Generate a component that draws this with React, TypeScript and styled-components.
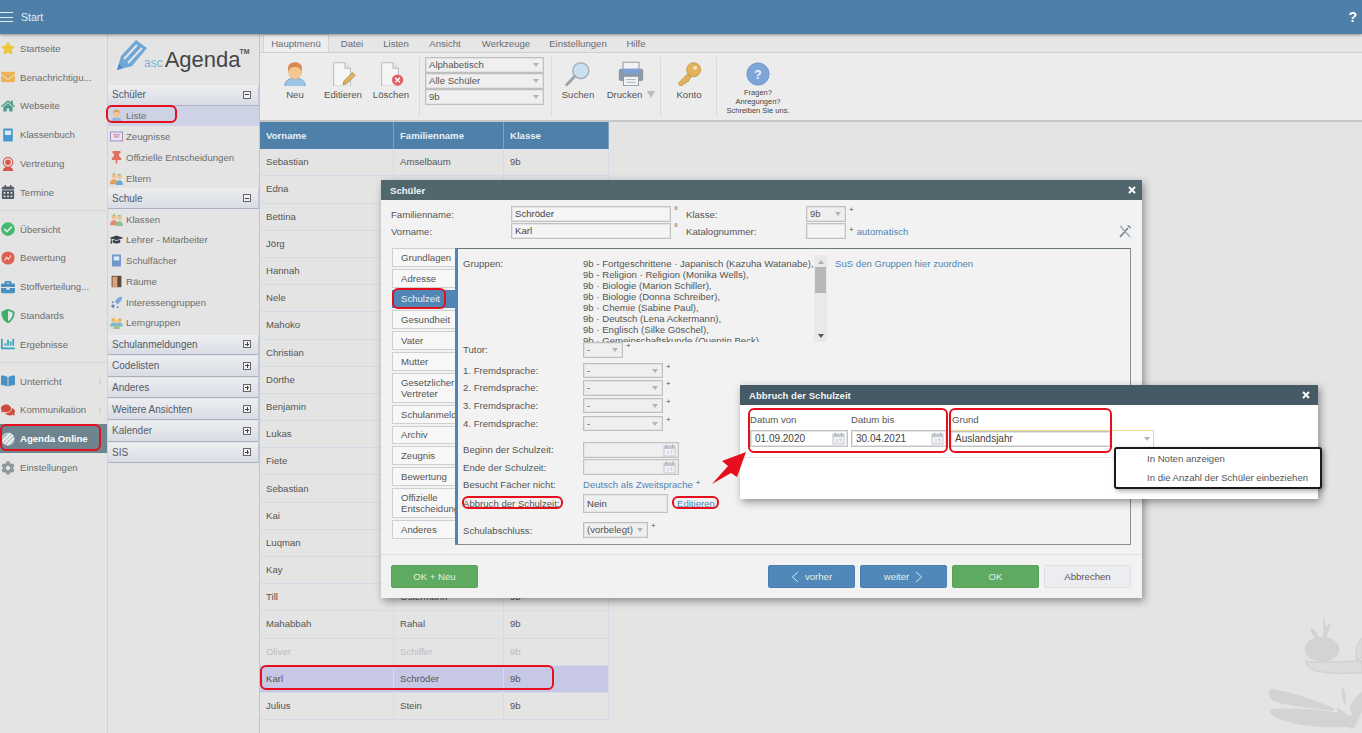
import * as React from 'react';
import styled, { createGlobalStyle } from 'styled-components';
import {
  FaStar, FaEnvelope, FaHome, FaCalendarAlt, FaCheckCircle, FaBriefcase, FaShieldAlt,
  FaChartBar, FaBookOpen, FaComments, FaCog, FaThumbtack, FaGraduationCap,
} from 'react-icons/fa';

const GlobalStyle = createGlobalStyle`
  html, body { margin: 0; padding: 0; background: #e4e4e4; }
  body { font-family: "Liberation Sans", Arial, sans-serif; font-size: 9.6px; color: #555; }
  * { box-sizing: border-box; }
`;

const Page = styled.div`
  position: relative;
  width: 1362px;
  height: 733px;
  overflow: hidden;
  background: #e4e4e4;
`;

const Header = styled.header`
  height: 34px;
  display: flex;
  align-items: center;
  background: #4e7fa8;
  color: #e4ecf3;
  font-size: 10.500px;
  box-shadow: 0 1px 3px rgba(0, 0, 0, .4);
  position: relative;
  z-index: 2;
`;
const Burger = styled.div`
  width: 13px;
  height: 10px;
  margin-right: 8px;
  border-top: 1px solid #e4ecf3;
  border-bottom: 1px solid #e4ecf3;
  position: relative;
  &::after {
    content: '';
    position: absolute;
    left: 0;
    right: 0;
    top: 3.5px;
    border-top: 1px solid #e4ecf3;
  }
`;
const Help = styled.span`
  margin-left: auto;
  margin-right: 5px;
  font-size: 14px;
  font-weight: bold;
  color: #fff;
`;

const Body = styled.div`
  display: flex;
  height: 699px;
`;

const Rail = styled.nav`
  width: 108px;
  flex: none;
  border-right: 1px solid #d2d2d2;
`;
const RailItem = styled.div<{ $active?: boolean }>`
  height: 28.8px;
  display: flex;
  align-items: center;
  gap: 5px;
  padding-left: 1px;
  color: ${p => (p.$active ? '#fff' : '#6d6d6d')};
  font-weight: ${p => (p.$active ? 'bold' : 'normal')};
  background: ${p => (p.$active ? '#6e858f' : 'transparent')};
  svg { flex: none; width: 14px; height: 14px; }
`;
const RailChevron = styled.span`
  margin-left: auto;
  margin-right: 5px;
  color: #c8c8c8;
  font-size: 12px;
`;
const RailDivider = styled.div`
  height: 1px;
  margin: 3.5px 0 3.5px;
  background: #d6d6d6;
`;

const SideNav = styled.nav`
  width: 152px;
  flex: none;
  border-right: 1px solid #c4c4c4;
`;
const Logo = styled.div`
  height: 51px;
  display: flex;
  align-items: flex-end;
  padding: 0 0 13.6px 8px;
`;
const LogoAsc = styled.span`
  color: #7fb0d8;
  font-size: 12px;
  margin: 0 2px 1px -3px;
  line-height: 14px;
`;
const LogoAgenda = styled.span`
  color: #454545;
  font-size: 22px;
  line-height: 22px;
`;
const LogoTm = styled.span`
  align-self: flex-start;
  margin: 14px 0 0 -1px;
  font-size: 7px;
  font-weight: bold;
  color: #555;
`;
const SectionHead = styled.div`
  height: 20.6px;
  display: flex;
  align-items: center;
  justify-content: space-between;
  padding: 0 7px 0 4px;
  color: #555b66;
  font-size: 10px;
  background: linear-gradient(#eceef1, #d9dce4);
  border-bottom: 1px solid #aab0bf;
  border-right: 1px solid #c4c8d2;
`;
const ClosedSections = styled.div`
  margin-top: 1.5px;
  display: flex;
  flex-direction: column;
  gap: 1px;
`;
const Toggle = styled.span<{ $open?: boolean }>`
  width: 8px;
  height: 8px;
  border: 1px solid #666;
  background: #f2f2f2;
  position: relative;
  &::before {
    content: '';
    position: absolute;
    left: 1px;
    right: 1px;
    top: 2.5px;
    border-top: 1px solid #444;
  }
  &::after {
    content: '';
    display: ${p => (p.$open ? 'none' : 'block')};
    position: absolute;
    top: 1px;
    bottom: 1px;
    left: 2.5px;
    border-left: 1px solid #444;
  }
`;
const NavItem = styled.div<{ $active?: boolean }>`
  height: 20.7px;
  display: flex;
  align-items: center;
  gap: 3px;
  padding-left: 2px;
  color: #6d6d6d;
  background: ${p => (p.$active ? '#cdd2e4' : 'transparent')};
  svg { flex: none; width: 13px; height: 13px; }
`;

const Main = styled.main`
  flex: 1;
  min-width: 0;
`;
const RibbonTabs = styled.div`
  height: 19px;
  display: flex;
  align-items: flex-end;
  padding-left: 3px;
  background: #e6e6e6;
  border-bottom: 1px solid #cfcfcf;
`;
const RibbonTab = styled.div<{ $active?: boolean; $width: number }>`
  width: ${p => p.$width}px;
  height: 18px;
  line-height: 17px;
  text-align: center;
  color: #666d77;
  background: ${p => (p.$active ? '#eeeeee' : 'transparent')};
  border: 1px solid ${p => (p.$active ? '#d4d4d4' : 'transparent')};
  border-bottom: 0;
`;
const RibbonBar = styled.div`
  height: 69px;
  display: flex;
  padding-left: 11px;
  background: #ececec;
  border-bottom: 2px solid #c6c6c6;
`;
const RibbonButton = styled.div<{ $width?: number; $top?: number }>`
  width: ${p => p.$width ?? 48}px;
  padding-top: ${p => p.$top ?? 5}px;
  display: flex;
  flex-direction: column;
  align-items: center;
  color: #555;
  svg { display: block; }
`;
const RibbonLabel = styled.div`
  margin-top: 3px;
  line-height: 11px;
  white-space: nowrap;
`;
const DropArrow = styled.span`
  display: inline-block;
  margin-left: 5px;
  border-left: 4px solid transparent;
  border-right: 4px solid transparent;
  border-top: 7px solid #bbb;
`;
const RibbonSep = styled.div<{ $left: number; $right: number }>`
  width: 1px;
  height: 60px;
  margin: 4px ${p => p.$right}px 0 ${p => p.$left}px;
  background: #dadada;
`;
const SelectStack = styled.div`
  width: 119px;
  padding-top: 4px;
  display: flex;
  flex-direction: column;
  gap: .6px;
`;
const SmallPrint = styled.div`
  margin-top: 2px;
  font-size: 7.5px;
  line-height: 9px;
  text-align: center;
  color: #444;
`;

const FakeSelect = styled.div<{ $width?: number; $h?: number }>`
  position: relative;
  width: ${p => (p.$width ? `${p.$width}px` : '100%')};
  height: ${p => p.$h ?? 15.5}px;
  line-height: ${p => (p.$h ?? 15.5) - 2}px;
  padding-left: 3px;
  color: #555;
  background: #efefef;
  border: 1px solid #bfbfbf;
  box-shadow: inset 0 0 0 1px #e2e2e2;
  &::after {
    content: '';
    position: absolute;
    right: 4px;
    top: 5px;
    border-left: 3px solid transparent;
    border-right: 3px solid transparent;
    border-top: 4px solid #b4b4b4;
  }
`;

const StudentTable = styled.div`
  width: 349px;
  display: grid;
  grid-template-columns: 134px 110px 105px;
  grid-auto-rows: 27.19px;
`;
const HeadCell = styled.div`
  display: flex;
  align-items: center;
  padding-left: 6px;
  background: #4e80a9;
  color: #e8eef4;
  font-weight: bold;
  border-right: 1px solid #7ea3c2;
`;
const Cell = styled.div<{ $selected?: boolean; $muted?: boolean }>`
  display: flex;
  align-items: center;
  padding-left: 6px;
  padding-bottom: 1px;
  color: ${p => (p.$muted ? '#bcbcbc' : '#555')};
  background: ${p => (p.$selected ? '#c7c8e6' : 'transparent')};
  border-right: 1px solid #d2dde7;
  border-bottom: 1px solid #d2dde7;
`;

const Dialog = styled.section<{ $x: number; $y: number; $w: number; $h: number; $bg: string }>`
  position: absolute;
  left: ${p => p.$x}px;
  top: ${p => p.$y}px;
  width: ${p => p.$w}px;
  height: ${p => p.$h}px;
  background: ${p => p.$bg};
  box-shadow: 2px 3px 8px rgba(0, 0, 0, .4);
  display: flex;
  flex-direction: column;
`;
const DialogTitle = styled.div<{ $bg: string; $closeGap: number }>`
  height: 20px;
  flex: none;
  display: flex;
  align-items: center;
  justify-content: space-between;
  padding: 0 ${p => p.$closeGap}px 0 9px;
  background: ${p => p.$bg};
  color: #f1f4f5;
  font-weight: bold;
`;
const CloseIcon = () => (
  <svg width="8" height="8" viewBox="0 0 8 8"><path d="M1 1l6 6M7 1L1 7" stroke="#fff" strokeWidth="2" /></svg>
);

const TopForm = styled.div`
  height: 48px;
  flex: none;
  padding: 6px 10px 0;
  display: grid;
  grid-template-columns: 120px 160px 15px 120px 40px 1fr;
  grid-auto-rows: 16px;
  row-gap: 1px;
  align-items: center;
`;
const Label = styled.div`
  color: #555;
  white-space: nowrap;
`;
const Input = styled.div<{ $width?: number; $h?: number; $disabled?: boolean; $white?: boolean }>`
  position: relative;
  width: ${p => (p.$width ? `${p.$width}px` : '100%')};
  height: ${p => p.$h ?? 16}px;
  line-height: ${p => (p.$h ?? 16) - 2}px;
  padding-left: ${p => (p.$white ? 4 : 3)}px;
  color: #444;
  font-size: ${p => (p.$white ? 10 : 9.6)}px;
  background: ${p => (p.$white ? '#fff' : p.$disabled ? '#efefef' : '#f5f5f5')};
  border: 1px solid #c2c2c2;
  box-shadow: inset 0 0 0 1px #e4e4e4;
`;
const Degree = styled.span`
  color: #666;
  margin-left: 3px;
  align-self: start;
  font-size: 10px;
  line-height: 10px;
`;
const Plus = styled.sup`
  color: #555;
  font-size: 8px;
  line-height: 8px;
  margin-left: 3px;
  align-self: flex-start;
`;
const InlineRow = styled.div`
  display: flex;
  align-items: center;
`;
const AutoLink = styled.div`
  display: flex;
  align-items: center;
  color: #4f86b5;
  justify-content: space-between;
`;
const PlusLink = styled.span`
  display: flex;
  align-items: flex-start;
  gap: 3px;
`;

const TabArea = styled.div`
  flex: none;
  height: 297px;
  display: flex;
  padding: 0 11px 0 11px;
`;
const SideTabs = styled.div`
  width: 63px;
  flex: none;
  display: flex;
  flex-direction: column;
  gap: 2px;
`;
const SideTab = styled.div<{ $active?: boolean; $tall?: boolean }>`
  height: ${p => (p.$tall ? 30 : 18.8)}px;
  display: flex;
  align-items: center;
  padding-left: 8px;
  line-height: 11px;
  white-space: nowrap;
  overflow: hidden;
  color: ${p => (p.$active ? '#e8f0f6' : '#555')};
  background: ${p => (p.$active ? '#4f86b5' : '#f7f7f7')};
  border: 1px solid ${p => (p.$active ? '#4f86b5' : '#cfcfcf')};
  border-right: 0;
`;
const TabPanel = styled.div`
  flex: 1;
  padding: 6px 0 0 5px;
  background: #f2f2f2;
  border-top: 1px solid #69767c;
  border-left: 3px solid #4f86b5;
  border-right: 1px solid #8d8d8d;
  border-bottom: 1px solid #8d8d8d;
`;
const FieldRow = styled.div<{ $h?: number; $mt?: number }>`
  display: grid;
  grid-template-columns: 120px 1fr;
  align-items: center;
  height: ${p => p.$h ?? 15.5}px;
  margin-top: ${p => p.$mt ?? 2.2}px;
`;
const GroupRow = styled.div`
  display: flex;
  height: 87px;
`;
const GroupLabel = styled(Label)`
  width: 120px;
  padding-top: 3px;
`;
const GroupList = styled.div`
  width: 231px;
  height: 87px;
  overflow: hidden;
  padding-top: 2.5px;
  line-height: 11.13px;
  white-space: nowrap;
  color: #555;
`;
const FakeScrollbar = styled.div`
  width: 13px;
  height: 87px;
  background: #e9e9e9;
  display: flex;
  flex-direction: column;
  justify-content: space-between;
  align-items: center;
  padding: 5px 0 4px;
`;
const ScrollUp = styled.div`
  border-left: 3px solid transparent;
  border-right: 3px solid transparent;
  border-bottom: 4px solid #b0b0b0;
`;
const ScrollThumb = styled.div`
  width: 11px;
  height: 26px;
  margin-top: 3px;
  margin-bottom: auto;
  background: #b8b8b8;
`;
const ScrollDown = styled.div`
  border-left: 3px solid transparent;
  border-right: 3px solid transparent;
  border-top: 4px solid #555;
`;
const BlueLink = styled.span<{ $ml?: number }>`
  color: #4f86b5;
  margin-left: ${p => p.$ml ?? 0}px;
`;
const GroupLink = styled(BlueLink)`
  padding-top: 3px;
`;
const DateIcon = styled.span`
  position: absolute;
  right: 2px;
  top: 1px;
  display: flex;
`;
const DialogFooter = styled.div`
  flex: 1;
  margin-top: 9px;
  padding: 10px 11px 0 10px;
  border-top: 1px solid #dfdfdf;
  display: flex;
  gap: 5px;
`;
const FooterSpacer = styled.div`
  flex: 1;
`;
const ActionButton = styled.div<{ $kind: 'blue' | 'green' | 'plain' }>`
  width: 87px;
  height: 23px;
  display: flex;
  align-items: center;
  justify-content: center;
  gap: 6px;
  border-radius: 2px;
  color: ${p => (p.$kind === 'plain' ? '#555' : '#e6f0e8')};
  background: ${p => (p.$kind === 'blue' ? '#4f88b9' : p.$kind === 'green' ? '#5faa61' : '#ecedf1')};
  border: 1px solid ${p => (p.$kind === 'blue' ? '#4a7fad' : p.$kind === 'green' ? '#5aa25c' : '#dddde2')};
`;

const CancelForm = styled.div`
  height: 53px;
  flex: none;
  display: flex;
  padding: 9px 0 0 10px;
  border-bottom: 1px solid #e6e6e6;
`;
const CancelField = styled.div<{ $width: number }>`
  width: ${p => p.$width}px;
  flex: none;
`;
const CancelLabel = styled.div<{ $indent?: number }>`
  height: 16px;
  line-height: 12px;
  padding-left: ${p => p.$indent ?? 0}px;
  color: #555;
`;
const ReasonBox = styled.div`
  display: flex;
  width: 204px;
  height: 17px;
  border-top: 1px solid #f0d68c;
  border-right: 1px solid #f0d68c;
  position: relative;
  &::after {
    content: '';
    position: absolute;
    right: 3px;
    top: 6px;
    border-left: 3px solid transparent;
    border-right: 3px solid transparent;
    border-top: 4px solid #b4b4b4;
  }
`;
const PopupMenu = styled.div`
  position: absolute;
  left: 374px;
  top: 62px;
  width: 208px;
  height: 42px;
  padding-left: 31px;
  display: flex;
  flex-direction: column;
  justify-content: space-around;
  background: #fff;
  color: #555;
  border: 2px solid #1a1a1a;
  border-radius: 3px;
  box-shadow: 2px 2px 5px rgba(0, 0, 0, .35);
`;

const Mark = styled.div<{ $x: number; $y: number; $w: number; $h: number }>`
  position: absolute;
  left: ${p => p.$x}px;
  top: ${p => p.$y}px;
  width: ${p => p.$w}px;
  height: ${p => p.$h}px;
  border: 2px solid #e60f1e;
  border-radius: 6px;
  pointer-events: none;
`;
const Arrow = styled.svg`
  position: absolute;
  left: 708px;
  top: 448px;
`;
const Decoration = styled.svg`
  position: absolute;
  left: 1240px;
  top: 600px;
`;

// ---- drawn icons ----

const Person = ({ hair = '#d99a5b', body = '#8fb8dc', skin = '#f2c68f', size = 13 }) => (
  <svg width={size} height={size} viewBox="0 0 16 16">
    <path d="M1.5 16c0-4 3-6 6.500-6s6.500 2 6.500 6z" fill={body} />
    <ellipse cx="8" cy="6" rx="3.700" ry="4.500" fill={skin} />
    <path d="M4.200 6C3.600 2.500 5.500 1 8 1s4.400 1.500 3.800 5C11 4 9.500 3.500 8 3.500S5 4 4.200 6z" fill={hair} />
  </svg>
);
const Pair = ({ a = '#e0a050', b = '#6fa8d8', c = '#7dbb8a' }) => (
  <svg viewBox="0 0 16 16">
    <circle cx="5" cy="5" r="3" fill="#f0c08a" />
    <path d="M0 15c0-4 2-6 5-6s4 2 4 6z" fill={a} />
    <circle cx="11.500" cy="6" r="3" fill="#eec796" />
    <path d="M7 16c0-4 2-6 4.500-6s4.500 2 4.500 6z" fill={b} />
    <path d="M3 3c1-2 3-2 4 0z M9 4c1-2 4-2 5 0z" fill={c} />
  </svg>
);
const VertretungIcon = () => (
  <svg viewBox="0 0 16 16">
    <circle cx="8" cy="6" r="5.500" fill="none" stroke="#d9574a" strokeWidth="1.200" />
    <circle cx="8" cy="6" r="3.200" fill="#d9574a" />
    <path d="M2 16c0-3 3-5 6-5s6 2 6 5z" fill="#d9574a" />
  </svg>
);
const BookIcon = ({ color = '#4a9ad0' }) => (
  <svg viewBox="0 0 16 16">
    <rect x="2.500" y="0.500" width="11" height="15" rx="1" fill={color} />
    <rect x="4.500" y="3" width="7" height="5" fill="#dcecf7" />
  </svg>
);
const BewertungIcon = () => (
  <svg viewBox="0 0 16 16">
    <circle cx="8" cy="8" r="7.500" fill="#e0604f" />
    <path d="M4 11l2.500-4 2 2.500L11.500 5" fill="none" stroke="#f7d7d2" strokeWidth="1.200" />
  </svg>
);
const StripeLogo = () => (
  <svg viewBox="0 0 16 16">
    <circle cx="8" cy="8" r="7.500" fill="#b9c6cc" />
    <path d="M1.500 11L11 1.500M3.500 13.500L13.500 3.500M7 15L15 7" stroke="#f3f5f6" strokeWidth="1.800" />
  </svg>
);
const CertIcon = () => (
  <svg viewBox="0 0 16 16">
    <rect x="0.500" y="2.500" width="15" height="11" fill="#e9e4f2" stroke="#8b7fb3" />
    <path d="M4 6h8M5 8.500h6" stroke="#d46a8c" strokeWidth="1.200" />
  </svg>
);
const DoorIcon = () => (
  <svg viewBox="0 0 16 16">
    <rect x="2" y="1" width="12" height="14" fill="#5a4a3e" />
    <rect x="3" y="2" width="6" height="13" fill="#e0a27a" />
  </svg>
);
const RocketIcon = () => (
  <svg viewBox="0 0 16 16">
    <path d="M15 1c-4 0-7 2-9 6l3 3c4-2 6-5 6-9z" fill="#7ea6da" />
    <path d="M5 8l-3 1 1-3zM9 12l-1 3 3-1z M1 12l3-2 2 2-2 3z" fill="#5a86c2" />
  </svg>
);
const CrowdIcon = () => (
  <svg viewBox="0 0 16 16">
    <circle cx="4" cy="5" r="2.500" fill="#e7b860" />
    <circle cx="12" cy="5" r="2.500" fill="#e7b860" />
    <circle cx="8" cy="7" r="2.500" fill="#f0cc80" />
    <path d="M0 13c0-3 2-5 4-5s3 1 4 1 2-1 4-1 4 2 4 5z" fill="#7fb6d6" />
    <path d="M4 16c0-3 2-5 4-5s4 2 4 5z" fill="#9cc48a" />
  </svg>
);

const RIBBON_VIEW = '-1 -3.500 32 29.870';

const DocIcon = ({ children }: { children: React.ReactNode }) => (
  <svg width="30" height="28" viewBox={RIBBON_VIEW}>
    <path d="M5 1.500h12l6 6v19H5z" fill="#f5f5f5" stroke="#b5b8bc" />
    <path d="M17 1.500v6h6" fill="#e6e6e6" stroke="#b5b8bc" />
    {children}
  </svg>
);
const NewIcon = () => (
  <svg width="30" height="28" viewBox={RIBBON_VIEW}>
    <path d="M4 27c0-6 4-9 11-9s11 3 11 9z" fill="#9ec5e6" stroke="#6f9cc4" />
    <ellipse cx="15" cy="11" rx="7" ry="8" fill="#f3c78f" stroke="#d8a566" strokeWidth=".5" />
    <path d="M8 11C6 3 11 1 15 1s9 2 7 10c-1-4-4-5-7-5s-6 1-7 5z" fill="#d88a52" />
  </svg>
);
const SearchIcon = () => (
  <svg width="30" height="28" viewBox={RIBBON_VIEW}>
    <circle cx="18" cy="10" r="8.500" fill="#c9e0f1" stroke="#a7aeb6" strokeWidth="1.500" />
    <path d="M11.500 16L3 25" stroke="#9aa2ac" strokeWidth="3" strokeLinecap="round" />
  </svg>
);
const PrintIcon = () => (
  <svg width="30" height="28" viewBox={RIBBON_VIEW}>
    <rect x="6.500" y="1" width="17" height="10" fill="#f3f3f3" stroke="#8b95a1" />
    <rect x="2" y="8" width="26" height="13" rx="2" fill="#8b99a8" />
    <rect x="6" y="8" width="18" height="5" fill="#7d9fd8" />
    <rect x="7" y="16" width="16" height="10" fill="#f3f3f3" stroke="#8b95a1" />
    <path d="M10 19.500h10M10 22.500h10" stroke="#a9b0b8" />
  </svg>
);
const KeyIcon = () => (
  <svg width="30" height="28" viewBox={RIBBON_VIEW}>
    <path d="M14 13l-10 10 1 3h3l1-2h2l1-2h2l3-5z" fill="#e2b25c" stroke="#b48735" strokeWidth=".7" />
    <circle cx="20" cy="9" r="7.500" fill="#e2b25c" stroke="#b48735" strokeWidth=".7" />
    <circle cx="21.500" cy="7" r="2" fill="#f5e7c4" />
  </svg>
);
const QuestionIcon = () => (
  <svg width="24" height="24" viewBox="0 0 26 26">
    <circle cx="13" cy="13" r="12" fill="#7ea5d8" stroke="#6a93c8" />
    <text x="13" y="18" textAnchor="middle" fontSize="13" fontWeight="bold" fill="#f2f6fb" fontFamily="Liberation Sans">?</text>
  </svg>
);
const CalendarIcon = () => (
  <svg width="13" height="13" viewBox="0 0 13 13">
    <rect x="1" y="2" width="11" height="10" fill="#f2f2f4" stroke="#c4c8d2" />
    <rect x="1" y="2" width="11" height="3" fill="#c4c8d2" />
    <path d="M3.500 .5v3M9.500 .5v3" stroke="#aab0bb" />
    <path d="M5 7v3M7 7h2v1l-1 2" stroke="#b5b9c2" strokeWidth=".7" fill="none" />
  </svg>
);
const ToolsIcon = () => (
  <svg width="14" height="14" viewBox="0 0 14 14">
    <path d="M2 13L10 4" stroke="#6f7f8a" strokeWidth="1.500" />
    <path d="M12 13L3 3" stroke="#a0abb3" strokeWidth="1.500" />
    <path d="M9 1.500a3 3 0 0 1 4 3l-2 -1z" fill="#6f7f8a" />
    <path d="M1.500 1.500l3 1-1 2z" fill="#a0abb3" />
  </svg>
);
const LogoMark = () => (
  <svg width="31" height="32" viewBox="0 0 31 32">
    <path d="M1 31L5 17 20 1l11 8-15 18z" fill="#6ea7d6" />
    <path d="M8 20L21 6M12 24L26 9" stroke="#e4e4e4" strokeWidth="2" />
    <path d="M1 31l2-6 4 4z" fill="#4f8cc0" />
  </svg>
);
const ChevronLeft = () => (
  <svg width="8" height="12" viewBox="0 0 8 12"><path d="M7 1L1.500 6 7 11" fill="none" stroke="#dbe8f2" /></svg>
);
const ChevronRight = () => (
  <svg width="8" height="12" viewBox="0 0 8 12"><path d="M1 1l5.500 5L1 11" fill="none" stroke="#dbe8f2" /></svg>
);

// ---- data ----

const railTop = [
  { label: 'Startseite', icon: <FaStar color="#eec63b" /> },
  { label: 'Benachrichtigu...', icon: <FaEnvelope color="#efb257" /> },
  { label: 'Webseite', icon: <FaHome color="#4f9e8f" /> },
  { label: 'Klassenbuch', icon: <BookIcon /> },
  { label: 'Vertretung', icon: <VertretungIcon /> },
  { label: 'Termine', icon: <FaCalendarAlt color="#4d5862" /> },
];
const railMid = [
  { label: 'Übersicht', icon: <FaCheckCircle color="#43b96f" /> },
  { label: 'Bewertung', icon: <BewertungIcon /> },
  { label: 'Stoffverteilung...', icon: <FaBriefcase color="#4a90c0" /> },
  { label: 'Standards', icon: <FaShieldAlt color="#3fae6a" /> },
  { label: 'Ergebnisse', icon: <FaChartBar color="#35a5bd" /> },
];

const schuelerItems = [
  { label: 'Liste', icon: <Person />, active: true },
  { label: 'Zeugnisse', icon: <CertIcon /> },
  { label: 'Offizielle Entscheidungen', icon: <FaThumbtack color="#e0705f" /> },
  { label: 'Eltern', icon: <Pair /> },
];
const schuleItems = [
  { label: 'Klassen', icon: <Pair a="#e08a70" b="#8cc08f" /> },
  { label: 'Lehrer - Mitarbeiter', icon: <FaGraduationCap color="#3b3f44" /> },
  { label: 'Schulfächer', icon: <BookIcon color="#6f97cf" /> },
  { label: 'Räume', icon: <DoorIcon /> },
  { label: 'Interessengruppen', icon: <RocketIcon /> },
  { label: 'Lerngruppen', icon: <CrowdIcon /> },
];
const closedSections = ['Schulanmeldungen', 'Codelisten', 'Anderes', 'Weitere Ansichten', 'Kalender', 'SIS'];

const ribbonTabs = [
  { label: 'Hauptmenü', width: 66 },
  { label: 'Datei', width: 46 },
  { label: 'Listen', width: 42 },
  { label: 'Ansicht', width: 56 },
  { label: 'Werkzeuge', width: 66 },
  { label: 'Einstellungen', width: 78 },
  { label: 'Hilfe', width: 38 },
];

// the middle of the list lies behind the dialog, only the first names show there
const students = [
  ['Sebastian', 'Amselbaum', '9b'], ['Edna'], ['Bettina'], ['Jörg'], ['Hannah'], ['Nele'],
  ['Mahoko'], ['Christian'], ['Dörthe'], ['Benjamin'], ['Lukas'], ['Fiete'],
  ['Sebastian'], ['Kai'], ['Luqman'], ['Kay'], ['Till', 'Ostermann', '9b'], ['Mahabbah', 'Rahal', '9b'],
  ['Oliver', 'Schiffer', '9b'], ['Karl', 'Schröder', '9b'], ['Julius', 'Stein', '9b'],
];

const sideTabs = [
  { label: 'Grundlagen' }, { label: 'Adresse' }, { label: 'Schulzeit', active: true }, { label: 'Gesundheit' },
  { label: 'Vater' }, { label: 'Mutter' }, { label: <>Gesetzlicher<br />Vertreter</>, tall: true },
  { label: 'Schulanmeldung' }, { label: 'Archiv' }, { label: 'Zeugnis' }, { label: 'Bewertung' },
  { label: <>Offizielle<br />Entscheidungen</>, tall: true }, { label: 'Anderes' },
];

const groups = [
  '9b - Fortgeschrittene · Japanisch (Kazuha Watanabe),',
  '9b - Religion · Religion (Monika Wells),',
  '9b · Biologie (Marion Schiller),',
  '9b · Biologie (Donna Schreiber),',
  '9b · Chemie (Sabine Paul),',
  '9b · Deutsch (Lena Ackermann),',
  '9b · Englisch (Silke Göschel),',
  '9b · Gemeinschaftskunde (Quentin Beck)',
];

const marks = [
  { x: 106, y: 105, w: 71, h: 18 },
  { x: 0, y: 424, w: 101, h: 27 },
  { x: 392, y: 288, w: 54, h: 21 },
  { x: 462, y: 496, w: 101, h: 13 },
  { x: 672, y: 496, w: 47, h: 13 },
  { x: 260, y: 665, w: 294, h: 25 },
  { x: 748, y: 408, w: 200, h: 45 },
  { x: 949, y: 408, w: 163, h: 45 },
];

export default function App() {
  return (
    <Page>
      <GlobalStyle />
      <Header>
        <Burger />
        Start
        <Help>?</Help>
      </Header>
      <Body>
        <Rail>
          {railTop.map(i => <RailItem key={i.label}>{i.icon}<span>{i.label}</span></RailItem>)}
          <RailDivider />
          {railMid.map(i => <RailItem key={i.label}>{i.icon}<span>{i.label}</span></RailItem>)}
          <RailDivider />
          <RailItem><FaBookOpen color="#4a90c0" /><span>Unterricht</span><RailChevron>›</RailChevron></RailItem>
          <RailItem><FaComments color="#cc4d40" /><span>Kommunikation</span><RailChevron>›</RailChevron></RailItem>
          <RailItem $active><StripeLogo /><span>Agenda Online</span></RailItem>
          <RailItem><FaCog color="#8a9a9a" /><span>Einstellungen</span></RailItem>
        </Rail>
        <SideNav>
          <Logo>
            <LogoMark />
            <LogoAsc>asc</LogoAsc>
            <LogoAgenda>Agenda</LogoAgenda>
            <LogoTm>TM</LogoTm>
          </Logo>
          <SectionHead>Schüler<Toggle $open /></SectionHead>
          {schuelerItems.map(i => <NavItem key={i.label} $active={i.active}>{i.icon}<span>{i.label}</span></NavItem>)}
          <SectionHead>Schule<Toggle $open /></SectionHead>
          {schuleItems.map(i => <NavItem key={i.label}>{i.icon}<span>{i.label}</span></NavItem>)}
          <ClosedSections>
            {closedSections.map(s => <SectionHead key={s}>{s}<Toggle /></SectionHead>)}
          </ClosedSections>
        </SideNav>
        <Main>
          <RibbonTabs>
            {ribbonTabs.map((t, n) => (
              <RibbonTab key={t.label} $width={t.width} $active={n === 0}>{t.label}</RibbonTab>
            ))}
          </RibbonTabs>
          <RibbonBar>
            <RibbonButton><NewIcon /><RibbonLabel>Neu</RibbonLabel></RibbonButton>
            <RibbonButton>
              <DocIcon>
                <path d="M15 25l1-4 9-9 3 3-9 9z" fill="#e2b25c" stroke="#8c6a2e" strokeWidth=".6" />
              </DocIcon>
              <RibbonLabel>Editieren</RibbonLabel>
            </RibbonButton>
            <RibbonButton>
              <DocIcon>
                <circle cx="22" cy="20" r="6" fill="#e0606a" />
                <path d="M19.500 17.500l5 5M24.500 17.500l-5 5" stroke="#fff" strokeWidth="1.500" />
              </DocIcon>
              <RibbonLabel>Löschen</RibbonLabel>
            </RibbonButton>
            <RibbonSep $left={4} $right={5} />
            <SelectStack>
              <FakeSelect>Alphabetisch</FakeSelect>
              <FakeSelect>Alle Schüler</FakeSelect>
              <FakeSelect>9b</FakeSelect>
            </SelectStack>
            <RibbonSep $left={7} $right={2} />
            <RibbonButton><SearchIcon /><RibbonLabel>Suchen</RibbonLabel></RibbonButton>
            <RibbonButton $width={58}>
              <PrintIcon />
              <RibbonLabel>Drucken<DropArrow /></RibbonLabel>
            </RibbonButton>
            <RibbonSep $left={0} $right={4} />
            <RibbonButton><KeyIcon /><RibbonLabel>Konto</RibbonLabel></RibbonButton>
            <RibbonSep $left={3} $right={3} />
            <RibbonButton $width={76} $top={9}>
              <QuestionIcon />
              <SmallPrint>Fragen?<br />Anregungen?<br />Schreiben Sie uns.</SmallPrint>
            </RibbonButton>
          </RibbonBar>
          <StudentTable>
            <HeadCell>Vorname</HeadCell>
            <HeadCell>Familienname</HeadCell>
            <HeadCell>Klasse</HeadCell>
            {students.map(([first, last, klass], n) => {
              const selected = first === 'Karl';
              const muted = first === 'Oliver';
              return (
                <React.Fragment key={n}>
                  <Cell $selected={selected} $muted={muted}>{first}</Cell>
                  <Cell $selected={selected} $muted={muted}>{last}</Cell>
                  <Cell $selected={selected} $muted={muted}>{klass}</Cell>
                </React.Fragment>
              );
            })}
          </StudentTable>
        </Main>
      </Body>

      <Decoration width="122" height="133" viewBox="0 0 366 399">
        <g fill="#d3d3d3">
          <ellipse cx="246" cy="148" rx="52" ry="38" />
          <path d="M236 112c-8-20-16-30-26-28 4 14 10 24 18 32zM250 112c0-20 0-40-2-62 6 8 8 18 10 30 4-4 10-8 16-14-4 18-10 32-16 46z" />
          <path d="M198 184c40 6 110 2 168-2v36c-60 4-120 4-150-10-10-6-18-14-18-24z" fill="#dcdcdc" stroke="#d3d3d3" strokeWidth="5" />
          <path d="M90 268c40 0 130 30 195 58l-6 6C200 322 120 316 96 300c-8-8-14-20-6-32z" />
          <path d="M92 328c60-6 180-2 260 24l-20 28c-80 6-180-4-230-30-8-6-14-14-10-22z" />
          <path d="M306 260c10 10 14 34 10 56-10-14-14-36-10-56zM290 320l40 30-30 10zM330 320c10-20 24-36 36-44v60l-24 50h-14l8-40z" />
          <path d="M366 116c-14 14-22 36-16 62 6 0 12-2 16-4z" fill="#dcdcdc" stroke="#d3d3d3" strokeWidth="4" />
        </g>
      </Decoration>

      <Dialog $x={381} $y={180} $w={761} $h={418} $bg="#f2f2f2">
        <DialogTitle $bg="#52666e" $closeGap={6}>Schüler<CloseIcon /></DialogTitle>
        <TopForm>
          <Label>Familienname:</Label>
          <Input>Schröder</Input>
          <Degree>°</Degree>
          <Label>Klasse:</Label>
          <FakeSelect $h={16}>9b</FakeSelect>
          <Plus>+</Plus>
          <Label>Vorname:</Label>
          <Input>Karl</Input>
          <Degree>°</Degree>
          <Label>Katalognummer:</Label>
          <Input />
          <AutoLink>
            <PlusLink><Plus>+</Plus>automatisch</PlusLink>
            <ToolsIcon />
          </AutoLink>
        </TopForm>
        <TabArea>
          <SideTabs>
            {sideTabs.map((t, n) => (
              <SideTab key={n} $active={t.active} $tall={t.tall}><span>{t.label}</span></SideTab>
            ))}
          </SideTabs>
          <TabPanel>
            <GroupRow>
              <GroupLabel>Gruppen:</GroupLabel>
              <GroupList>{groups.map(g => <div key={g}>{g}</div>)}</GroupList>
              <FakeScrollbar><ScrollUp /><ScrollThumb /><ScrollDown /></FakeScrollbar>
              <GroupLink $ml={8}>SuS den Gruppen hier zuordnen</GroupLink>
            </GroupRow>
            <FieldRow $mt={0}>
              <Label>Tutor:</Label>
              <InlineRow><FakeSelect $width={40}>-</FakeSelect><Plus>+</Plus></InlineRow>
            </FieldRow>
            {[1, 2, 3, 4].map(n => (
              <FieldRow key={n} $mt={n === 1 ? 5 : 2.2}>
                <Label>{n}. Fremdsprache:</Label>
                <InlineRow><FakeSelect $width={80}>-</FakeSelect><Plus>+</Plus></InlineRow>
              </FieldRow>
            ))}
            <FieldRow $mt={11}>
              <Label>Beginn der Schulzeit:</Label>
              <Input $width={96} $h={15.5} $disabled><DateIcon><CalendarIcon /></DateIcon></Input>
            </FieldRow>
            <FieldRow $mt={1.7}>
              <Label>Ende der Schulzeit:</Label>
              <Input $width={96} $h={15.5} $disabled><DateIcon><CalendarIcon /></DateIcon></Input>
            </FieldRow>
            <FieldRow $h={18} $mt={1}>
              <Label>Besucht Fächer nicht:</Label>
              <InlineRow><BlueLink>Deutsch als Zweitsprache</BlueLink><Plus>+</Plus></InlineRow>
            </FieldRow>
            <FieldRow $h={19} $mt={0}>
              <Label>Abbruch der Schulzeit:</Label>
              <InlineRow>
                <Input $width={85} $h={19} $disabled>Nein</Input>
                <BlueLink $ml={9}>Editieren</BlueLink>
              </InlineRow>
            </FieldRow>
            <FieldRow $mt={9.5}>
              <Label>Schulabschluss:</Label>
              <InlineRow><FakeSelect $width={65}>(vorbelegt)</FakeSelect><Plus>+</Plus></InlineRow>
            </FieldRow>
          </TabPanel>
        </TabArea>
        <DialogFooter>
          <ActionButton $kind="green">OK + Neu</ActionButton>
          <FooterSpacer />
          <ActionButton $kind="blue"><ChevronLeft />vorher</ActionButton>
          <ActionButton $kind="blue">weiter<ChevronRight /></ActionButton>
          <ActionButton $kind="green">OK</ActionButton>
          <ActionButton $kind="plain">Abbrechen</ActionButton>
        </DialogFooter>
      </Dialog>

      <Dialog $x={740} $y={385} $w={578} $h={114} $bg="#ffffff">
        <DialogTitle $bg="#455a64" $closeGap={8}>Abbruch der Schulzeit<CloseIcon /></DialogTitle>
        <CancelForm>
          <CancelField $width={101}>
            <CancelLabel>Datum von</CancelLabel>
            <Input $width={98} $h={17} $white>01.09.2020<DateIcon><CalendarIcon /></DateIcon></Input>
          </CancelField>
          <CancelField $width={99}>
            <CancelLabel>Datum bis</CancelLabel>
            <Input $width={96} $h={17} $white>30.04.2021<DateIcon><CalendarIcon /></DateIcon></Input>
          </CancelField>
          <CancelField $width={204}>
            <CancelLabel $indent={2}>Grund</CancelLabel>
            <ReasonBox><Input $width={161} $h={16} $white>Auslandsjahr</Input></ReasonBox>
          </CancelField>
        </CancelForm>
        <PopupMenu>
          <div>In Noten anzeigen</div>
          <div>In die Anzahl der Schüler einbeziehen</div>
        </PopupMenu>
      </Dialog>

      {marks.map(m => <Mark key={`${m.x}-${m.y}`} $x={m.x} $y={m.y} $w={m.w} $h={m.h} />)}
      <Arrow width="42" height="40" viewBox="0 0 42 40">
        <path d="M38 4L14 13l6 5L4 36l19-11 6 4z" fill="#e60f1e" />
      </Arrow>
    </Page>
  );
}
